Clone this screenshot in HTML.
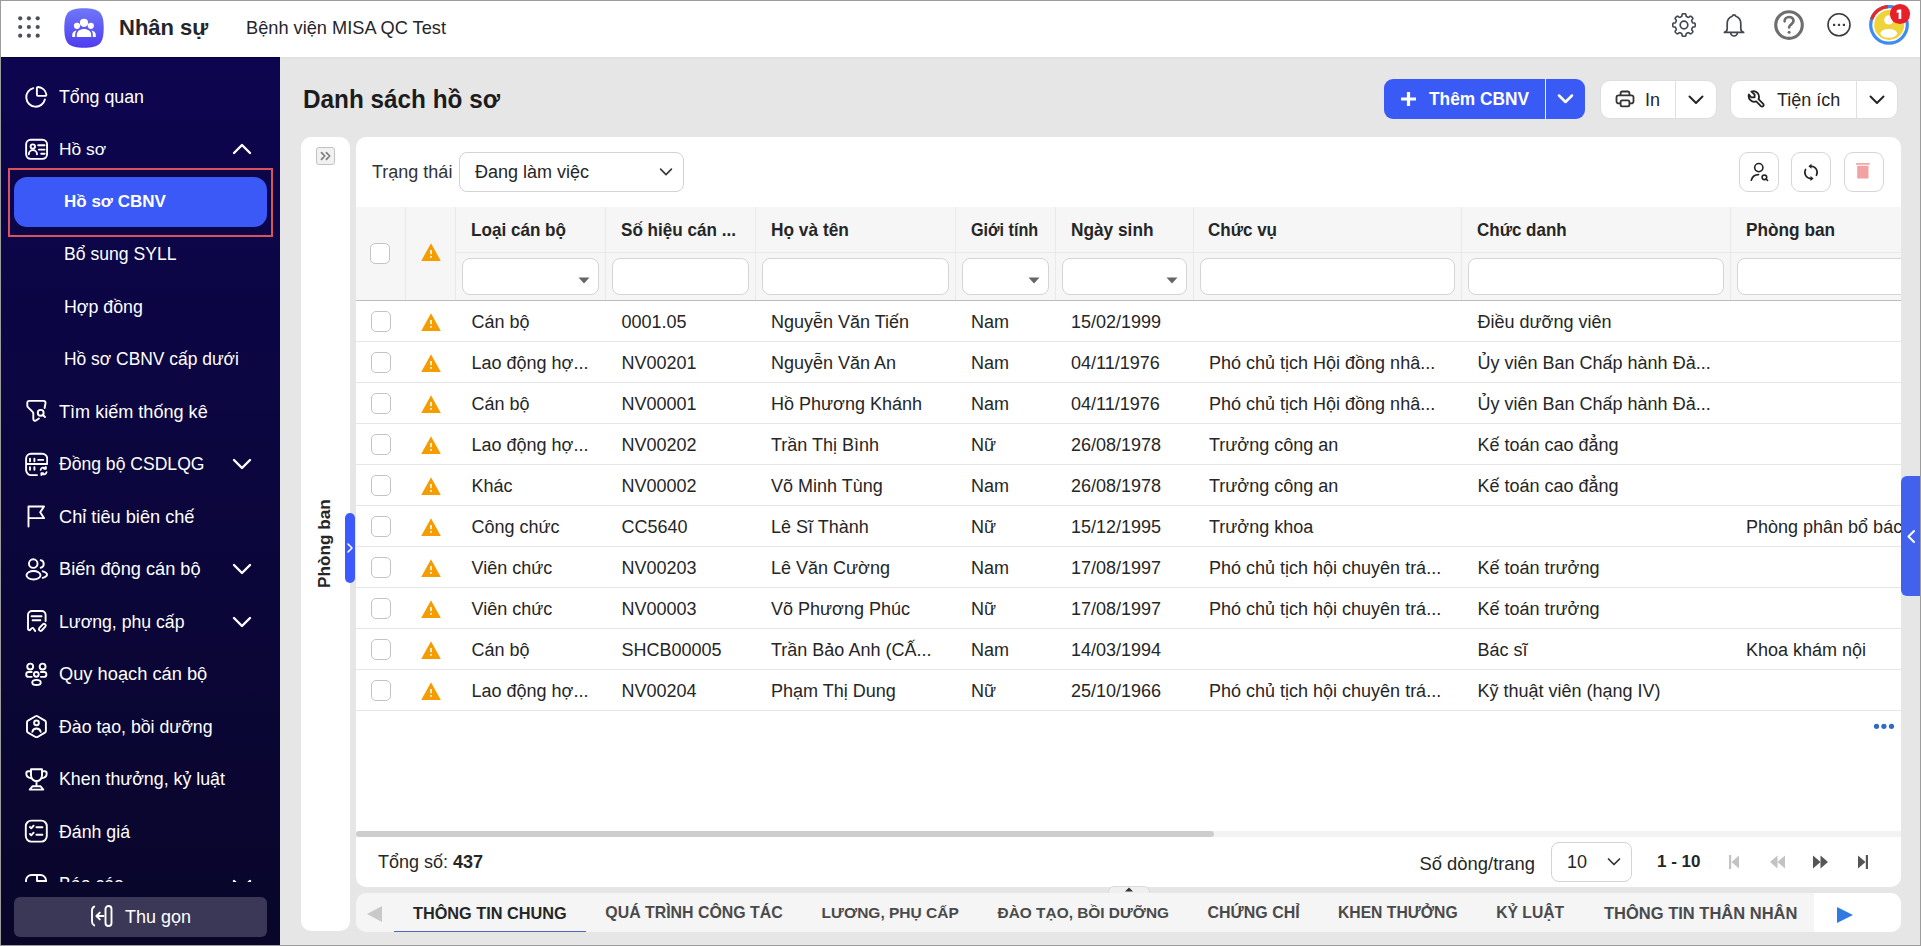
<!DOCTYPE html>
<html><head><meta charset="utf-8">
<style>
*{box-sizing:border-box;margin:0;padding:0}
html,body{width:1921px;height:946px;overflow:hidden;background:#fff;font-family:"Liberation Sans",sans-serif;color:#212121}
.a{position:absolute;white-space:nowrap}
svg{display:block}
#hdr{position:absolute;left:0;top:0;width:1921px;height:57px;background:#fff}
#side{position:absolute;left:0;top:57px;width:280px;height:889px;background:linear-gradient(180deg,#0d054f 0%,#0b0639 60%,#09062a 100%)}
#sclip{position:absolute;left:0;top:0;width:280px;height:882px;overflow:hidden}
#main{position:absolute;left:280px;top:57px;width:1641px;height:889px;background:#e6e6e6}
.bd{position:absolute;background:#9c9c9c}
.si{position:absolute;left:59px;font-size:17.6px;color:#fff;line-height:20px;white-space:nowrap}
</style></head><body>
<div id="hdr">
  <svg class="a" style="left:16px;top:14px" width="26" height="26" viewBox="0 0 26 26" fill="#4b505c">
    <circle cx="4.2" cy="4.3" r="2.1"/><circle cx="12.9" cy="4.3" r="2.1"/><circle cx="21.7" cy="4.3" r="2.1"/>
    <circle cx="4.2" cy="13" r="2.1"/><circle cx="12.9" cy="13" r="2.1"/><circle cx="21.7" cy="13" r="2.1"/>
    <circle cx="4.2" cy="21.7" r="2.1"/><circle cx="12.9" cy="21.7" r="2.1"/><circle cx="21.7" cy="21.7" r="2.1"/>
  </svg>
  <svg class="a" style="left:64px;top:8px" width="40" height="40" viewBox="0 0 40 40">
    <defs><linearGradient id="lg" x1="0" y1="0" x2="0" y2="1"><stop offset="0" stop-color="#6f78f8"/><stop offset="1" stop-color="#4f3cf0"/></linearGradient></defs>
    <path d="M20 0.3C35.5 0.3 39.7 4.5 39.7 20S35.5 39.7 20 39.7 0.3 35.5 0.3 20 4.5 0.3 20 0.3z" fill="url(#lg)"/>
    <g fill="#fff">
      <circle cx="20" cy="14.8" r="4.1"/><circle cx="13" cy="17.8" r="3.1"/><circle cx="26.8" cy="17.8" r="3.1"/>
      <path d="M12.8 29V26.8c0-3.6 3.2-5.8 7.2-5.8s7.2 2.2 7.2 5.8V29z"/>
      <path d="M8.2 29v-2c0-2.6 2-4.2 4.6-4.4-1.1 1-1.6 2.4-1.6 4V29z"/>
      <path d="M31.8 29v-2c0-2.6-2-4.2-4.6-4.4 1.1 1 1.6 2.4 1.6 4V29z"/>
    </g>
  </svg>
  <div class="a" style="left:119px;top:15px;font-size:22px;font-weight:bold;line-height:26px;color:#25262b">Nhân sự</div>
  <div class="a" style="left:246px;top:16.5px;font-size:18.5px;line-height:22px;color:#25262b;transform-origin:0 0;transform:scaleX(0.984)">Bệnh viện MISA QC Test</div>

  <svg class="a" style="left:1672px;top:13px" width="24" height="24" viewBox="0 0 24 24" fill="none" stroke="#42464f" stroke-width="1.6" stroke-linejoin="round"><path d="M23.20 12.00 L23.19 12.29 L23.18 12.59 L23.16 12.88 L23.11 13.17 L23.03 13.45 L22.84 13.72 L22.35 13.92 L21.52 14.02 L20.85 14.12 L20.53 14.29 L20.39 14.48 L20.29 14.69 L20.21 14.91 L20.13 15.12 L20.04 15.33 L19.95 15.54 L19.86 15.75 L19.77 15.96 L19.69 16.17 L19.65 16.42 L19.76 16.75 L20.16 17.30 L20.67 17.96 L20.88 18.45 L20.83 18.77 L20.68 19.03 L20.51 19.27 L20.32 19.49 L20.12 19.71 L19.92 19.92 L19.71 20.12 L19.49 20.32 L19.27 20.51 L19.03 20.68 L18.77 20.83 L18.45 20.88 L17.96 20.67 L17.30 20.16 L16.75 19.76 L16.42 19.65 L16.17 19.69 L15.96 19.77 L15.75 19.86 L15.54 19.95 L15.33 20.04 L15.12 20.13 L14.91 20.21 L14.69 20.29 L14.48 20.39 L14.29 20.53 L14.12 20.85 L14.02 21.52 L13.92 22.35 L13.72 22.84 L13.45 23.03 L13.17 23.11 L12.88 23.16 L12.59 23.18 L12.29 23.19 L12.00 23.20 L11.71 23.19 L11.41 23.18 L11.12 23.16 L10.83 23.11 L10.55 23.03 L10.28 22.84 L10.08 22.35 L9.98 21.52 L9.88 20.85 L9.71 20.53 L9.52 20.39 L9.31 20.29 L9.09 20.21 L8.88 20.13 L8.67 20.04 L8.46 19.95 L8.25 19.86 L8.04 19.77 L7.83 19.69 L7.58 19.65 L7.25 19.76 L6.70 20.16 L6.04 20.67 L5.55 20.88 L5.23 20.83 L4.97 20.68 L4.73 20.51 L4.51 20.32 L4.29 20.12 L4.08 19.92 L3.88 19.71 L3.68 19.49 L3.49 19.27 L3.32 19.03 L3.17 18.77 L3.12 18.45 L3.33 17.96 L3.84 17.30 L4.24 16.75 L4.35 16.42 L4.31 16.17 L4.23 15.96 L4.14 15.75 L4.05 15.54 L3.96 15.33 L3.87 15.12 L3.79 14.91 L3.71 14.69 L3.61 14.48 L3.47 14.29 L3.15 14.12 L2.48 14.02 L1.65 13.92 L1.16 13.72 L0.97 13.45 L0.89 13.17 L0.84 12.88 L0.82 12.59 L0.81 12.29 L0.80 12.00 L0.81 11.71 L0.82 11.41 L0.84 11.12 L0.89 10.83 L0.97 10.55 L1.16 10.28 L1.65 10.08 L2.48 9.98 L3.15 9.88 L3.47 9.71 L3.61 9.52 L3.71 9.31 L3.79 9.09 L3.87 8.88 L3.96 8.67 L4.05 8.46 L4.14 8.25 L4.23 8.04 L4.31 7.83 L4.35 7.58 L4.24 7.25 L3.84 6.70 L3.33 6.04 L3.12 5.55 L3.17 5.23 L3.32 4.97 L3.49 4.73 L3.68 4.51 L3.88 4.29 L4.08 4.08 L4.29 3.88 L4.51 3.68 L4.73 3.49 L4.97 3.32 L5.23 3.17 L5.55 3.12 L6.04 3.33 L6.70 3.84 L7.25 4.24 L7.58 4.35 L7.83 4.31 L8.04 4.23 L8.25 4.14 L8.46 4.05 L8.67 3.96 L8.88 3.87 L9.09 3.79 L9.31 3.71 L9.52 3.61 L9.71 3.47 L9.88 3.15 L9.98 2.48 L10.08 1.65 L10.28 1.16 L10.55 0.97 L10.83 0.89 L11.12 0.84 L11.41 0.82 L11.71 0.81 L12.00 0.80 L12.29 0.81 L12.59 0.82 L12.88 0.84 L13.17 0.89 L13.45 0.97 L13.72 1.16 L13.92 1.65 L14.02 2.48 L14.12 3.15 L14.29 3.47 L14.48 3.61 L14.69 3.71 L14.91 3.79 L15.12 3.87 L15.33 3.96 L15.54 4.05 L15.75 4.14 L15.96 4.23 L16.17 4.31 L16.42 4.35 L16.75 4.24 L17.30 3.84 L17.96 3.33 L18.45 3.12 L18.77 3.17 L19.03 3.32 L19.27 3.49 L19.49 3.68 L19.71 3.88 L19.92 4.08 L20.12 4.29 L20.32 4.51 L20.51 4.73 L20.68 4.97 L20.83 5.23 L20.88 5.55 L20.67 6.04 L20.16 6.70 L19.76 7.25 L19.65 7.58 L19.69 7.83 L19.77 8.04 L19.86 8.25 L19.95 8.46 L20.04 8.67 L20.13 8.88 L20.21 9.09 L20.29 9.31 L20.39 9.52 L20.53 9.71 L20.85 9.88 L21.52 9.98 L22.35 10.08 L22.84 10.28 L23.03 10.55 L23.11 10.83 L23.16 11.12 L23.18 11.41 L23.19 11.71Z"/><circle cx="12" cy="12" r="3.8" stroke-width="1.7"/></svg>
  <svg class="a" style="left:1722px;top:13px" width="24" height="26" viewBox="0 0 24 26" fill="none" stroke="#42464f" stroke-width="1.7" stroke-linejoin="round" stroke-linecap="round">
    <path d="M12 1.8c-1 0-1.6.6-1.8 1.4C7 4.3 5.2 7.2 5.2 10.6v5.2c0 1.6-.9 3-2.8 3.6h19.2c-1.9-.6-2.8-2-2.8-3.6v-5.2c0-3.4-1.8-6.3-5-7.4-.2-.8-.8-1.4-1.8-1.4z"/>
    <path d="M8.6 19.6a3.4 3.4 0 0 0 6.8 0"/>
  </svg>
  <svg class="a" style="left:1773px;top:9px" width="32" height="32" viewBox="0 0 32 32" fill="none" stroke="#6e6e6e" stroke-linecap="round">
    <circle cx="16" cy="16.1" r="13.3" stroke-width="3.1"/>
    <path d="M11.6 12.3c0-2.6 2-4.3 4.5-4.3s4.4 1.6 4.4 4c0 3.3-4.4 3.4-4.4 6.4" stroke-width="2.7" stroke-linejoin="round"/>
    <circle cx="16.1" cy="23.2" r="1.5" fill="#6e6e6e" stroke="none"/>
  </svg>
  <svg class="a" style="left:1827px;top:13px" width="24" height="24" viewBox="0 0 24 24" fill="none" stroke="#3a3a3a" stroke-width="1.6">
    <circle cx="12" cy="11.8" r="11"/>
    <g fill="#3a3a3a" stroke="none"><rect x="6" y="10.8" width="2.2" height="2.2"/><rect x="10.9" y="10.8" width="2.2" height="2.2"/><rect x="15.8" y="10.8" width="2.2" height="2.2"/></g>
  </svg>
  <svg class="a" style="left:1867px;top:3px" width="46" height="44" viewBox="0 0 46 44">
    <circle cx="22" cy="21.85" r="18.3" fill="none" stroke="#3f8cf0" stroke-width="3.2"/>
    <path d="M4.6 16.2A18.3 18.3 0 0 1 21 3.6" fill="none" stroke="#e32b2b" stroke-width="3.2"/>
    <circle cx="22.2" cy="22" r="15" fill="#efd33b"/>
    <circle cx="21.8" cy="16.9" r="4.6" fill="#fff"/>
    <ellipse cx="21.8" cy="30.3" rx="8.4" ry="4.4" fill="#fff"/>
    <circle cx="33" cy="11" r="10.1" fill="#e71f28"/>
    <path d="M31.6 6.4h2.7v9.6h-2.7V9.3l-1.9.8V7.6z" fill="#fff"/>
  </svg>
</div>
<div id="main"></div>
<div class="a" style="left:302.5px;top:84.5px;font-size:26.2px;font-weight:bold;line-height:28px;color:#1c1c1c;transform-origin:0 0;transform:scaleX(0.9284)">Danh sách hồ sơ</div>
<div class="a" style="left:1384px;top:79px;width:201px;height:40px;border-radius:9px;background:#3a5af6"></div>
<div class="a" style="left:1545px;top:79px;width:1.2px;height:40px;background:#eef0ff"></div>
<svg class="a" style="left:1400px;top:91px" width="17" height="17" viewBox="0 0 17 17" stroke="#fff" stroke-width="3.2" stroke-linecap="butt"><path d="M8.5 1v14M1 8h15"/></svg>
<div class="a" style="left:1429px;top:89.2px;font-size:18.6px;font-weight:bold;line-height:20px;color:#fff;transform-origin:0 0;transform:scaleX(0.9308)">Thêm CBNV</div>
<svg class="a" style="left:1557px;top:93px" width="17" height="12" viewBox="0 0 17 12" fill="none" stroke="#fff" stroke-width="2.5" stroke-linecap="round" stroke-linejoin="round"><path d="M2 2.5l6.5 6.5 6.5-6.5"/></svg>
<div class="a" style="left:1600px;top:79.5px;width:117px;height:39px;border-radius:10px;background:#fff;border:1px solid #dedede"></div>
<div class="a" style="left:1675px;top:80px;width:1px;height:39px;background:#e0e0e0"></div>
<svg class="a" style="left:1615px;top:90px" width="20" height="18" viewBox="0 0 20 18" fill="none" stroke="#333" stroke-width="1.8" stroke-linejoin="round"><path d="M5.6 5.3V3.1A1.6 1.6 0 0 1 7.2 1.5h5.6a1.6 1.6 0 0 1 1.6 1.6v2.2"/><path d="M5 13.4H3.6a2.1 2.1 0 0 1-2.1-2.1V7.4a2.1 2.1 0 0 1 2.1-2.1h12.8a2.1 2.1 0 0 1 2.1 2.1v3.9a2.1 2.1 0 0 1-2.1 2.1H15"/><rect x="5.6" y="10.3" width="8.8" height="6" rx="1.6"/></svg>
<div class="a" style="left:1645px;top:90px;font-size:18px;line-height:20px;color:#262626">In</div>
<svg class="a" style="left:1688px;top:94px" width="17" height="12" viewBox="0 0 17 12" fill="none" stroke="#262626" stroke-width="2" stroke-linecap="round" stroke-linejoin="round"><path d="M1.5 2.5l6.5 6.5 6.5-6.5"/></svg>
<div class="a" style="left:1730px;top:79.5px;width:167.5px;height:39px;border-radius:10px;background:#fff;border:1px solid #dedede"></div>
<div class="a" style="left:1856px;top:80px;width:1px;height:39px;background:#e0e0e0"></div>
<svg class="a" style="left:1746px;top:90px" width="20" height="20" viewBox="0 0 20 20" fill="none" stroke="#222" stroke-width="1.8" stroke-linejoin="round"><path d="M5.4 1.6L8.6 4.5V7.3H5.1L2.9 4.5A5.6 5.6 0 0 0 10.2 11.4L14.9 16.1A1.6 1.6 0 0 0 17.2 13.8L12.5 9.1A5.6 5.6 0 0 0 5.4 1.6Z"/></svg>
<div class="a" style="left:1777px;top:90px;font-size:18px;line-height:20px;color:#262626">Tiện ích</div>
<svg class="a" style="left:1869px;top:94px" width="17" height="12" viewBox="0 0 17 12" fill="none" stroke="#262626" stroke-width="2" stroke-linecap="round" stroke-linejoin="round"><path d="M1.5 2.5l6.5 6.5 6.5-6.5"/></svg>
<div class="a" style="left:301px;top:137px;width:49px;height:794px;border-radius:10px;background:#fff"></div>
<div class="a" style="left:316px;top:147px;width:19px;height:18px;border-radius:3px;background:#f1f1f1;border:1px solid #c2c2c2"></div>
<svg class="a" style="left:320px;top:151px" width="12" height="10" viewBox="0 0 12 10" fill="none" stroke="#7c7c7c" stroke-width="1.7" stroke-linecap="round" stroke-linejoin="round"><path d="M1.5 1.6L4.8 5 1.5 8.4M6.4 1.6L9.7 5 6.4 8.4"/></svg>
<div class="a" style="left:316px;top:588px;transform-origin:0 0;transform:rotate(-90deg);font-size:17.2px;font-weight:bold;line-height:16px;color:#262626">Phòng ban</div>
<div class="a" style="left:345px;top:513px;width:10px;height:70px;border-radius:5px;background:#3d5afe"></div>
<svg class="a" style="left:346px;top:542px" width="8" height="12" viewBox="0 0 8 12" fill="none" stroke="#fff" stroke-width="1.6" stroke-linecap="round" stroke-linejoin="round"><path d="M2 2l4 4-4 4"/></svg>
<div class="a" style="left:356px;top:137px;width:1545px;height:750px;border-radius:10px;background:#fff;overflow:hidden">
</div>
<div class="a" style="left:0;top:0;width:1901px;height:887px;overflow:hidden">
<div class="a" style="left:372px;top:162px;font-size:18px;line-height:20px;color:#333">Trạng thái</div>
<div class="a" style="left:459px;top:152px;width:225px;height:40px;border-radius:8px;border:1px solid #d3d3d3;background:#fff"></div>
<div class="a" style="left:475px;top:162px;font-size:18px;line-height:20px;color:#262626">Đang làm việc</div>
<svg class="a" style="left:659px;top:167px" width="14" height="10" viewBox="0 0 14 10" fill="none" stroke="#3a3a3a" stroke-width="1.7" stroke-linecap="round" stroke-linejoin="round"><path d="M1.6 2.2l5.4 5.4 5.4-5.4"/></svg>
<div class="a" style="left:1739px;top:152px;width:40px;height:40px;border-radius:9px;border:1px solid #d6d6d6;background:#fff"></div>
<div class="a" style="left:1791px;top:152px;width:40px;height:40px;border-radius:9px;border:1px solid #d6d6d6;background:#fff"></div>
<div class="a" style="left:1844px;top:152px;width:40px;height:40px;border-radius:9px;border:1px solid #d6d6d6;background:#fff"></div>
<svg class="a" style="left:1748px;top:161px" width="22" height="22" viewBox="0 0 22 22" fill="none" stroke="#222" stroke-width="1.6" stroke-linecap="round"><circle cx="10.8" cy="6.6" r="4.1"/><path d="M3.3 19.3A7.6 7.6 0 0 1 10.6 13.6"/><circle cx="16.4" cy="16.3" r="2.3"/><path d="M18.1 18l1.5 1.5"/></svg>
<svg class="a" style="left:1800px;top:161px" width="22" height="22" viewBox="0 0 22 22" fill="none" stroke="#222" stroke-width="1.6" stroke-linecap="round"><path d="M11.3 5.2A6.2 6.2 0 0 1 16.4 14.4"/><path d="M10.7 17.6A6.2 6.2 0 0 1 5.6 8.4"/><path d="M8.4 5.2l3.1-2.5v5z" fill="#222" stroke="none"/><path d="M13.6 17.6l-3.1 2.5v-5z" fill="#222" stroke="none"/></svg>
<svg class="a" style="left:1853px;top:161px" width="22" height="22" viewBox="0 0 22 22"><rect x="3" y="2.1" width="13.8" height="1.6" fill="#f0a0a0"/><path d="M4.2 4.8h11.3v11.6a1.2 1.2 0 0 1-1.2 1.2H5.4a1.2 1.2 0 0 1-1.2-1.2z" fill="#f2a2a2"/></svg>
<div class="a" style="left:356px;top:207px;width:1545px;height:93px;background:#f6f6f6"></div>
<div class="a" style="left:455px;top:252px;width:1446px;height:1px;background:#e8e8e8"></div>
<div class="a" style="left:356px;top:300px;width:1545px;height:1px;background:#bdbdbd"></div>
<div class="a" style="left:405px;top:207px;width:1px;height:93px;background:#e9e9e9"></div>
<div class="a" style="left:455px;top:207px;width:1px;height:93px;background:#e9e9e9"></div>
<div class="a" style="left:605px;top:207px;width:1px;height:93px;background:#e9e9e9"></div>
<div class="a" style="left:755px;top:207px;width:1px;height:93px;background:#e9e9e9"></div>
<div class="a" style="left:955px;top:207px;width:1px;height:93px;background:#e9e9e9"></div>
<div class="a" style="left:1055px;top:207px;width:1px;height:93px;background:#e9e9e9"></div>
<div class="a" style="left:1193px;top:207px;width:1px;height:93px;background:#e9e9e9"></div>
<div class="a" style="left:1461px;top:207px;width:1px;height:93px;background:#e9e9e9"></div>
<div class="a" style="left:1730px;top:207px;width:1px;height:93px;background:#e9e9e9"></div>
<div class="a" style="left:471.0px;top:219.5px;font-size:18.4px;font-weight:bold;line-height:20px;color:#262626;transform-origin:0 0;transform:scaleX(0.9295)">Loại cán bộ</div>
<div class="a" style="left:621.0px;top:219.5px;font-size:18.4px;font-weight:bold;line-height:20px;color:#262626;transform-origin:0 0;transform:scaleX(0.9299)">Số hiệu cán ...</div>
<div class="a" style="left:771.0px;top:219.5px;font-size:18.4px;font-weight:bold;line-height:20px;color:#262626;transform-origin:0 0;transform:scaleX(0.9409)">Họ và tên</div>
<div class="a" style="left:971.2px;top:219.5px;font-size:18.4px;font-weight:bold;line-height:20px;color:#262626;transform-origin:0 0;transform:scaleX(0.8793)">Giới tính</div>
<div class="a" style="left:1070.6px;top:219.5px;font-size:18.4px;font-weight:bold;line-height:20px;color:#262626;transform-origin:0 0;transform:scaleX(0.9385)">Ngày sinh</div>
<div class="a" style="left:1208.4px;top:219.5px;font-size:18.4px;font-weight:bold;line-height:20px;color:#262626;transform-origin:0 0;transform:scaleX(0.9244)">Chức vụ</div>
<div class="a" style="left:1477.2px;top:219.5px;font-size:18.4px;font-weight:bold;line-height:20px;color:#262626;transform-origin:0 0;transform:scaleX(0.9237)">Chức danh</div>
<div class="a" style="left:1745.6px;top:219.5px;font-size:18.4px;font-weight:bold;line-height:20px;color:#262626;transform-origin:0 0;transform:scaleX(0.9377)">Phòng ban</div>
<div class="a" style="left:462px;top:258px;width:137px;height:37px;border-radius:8px;border:1px solid #d5d5d5;background:#fff"></div>
<svg class="a" style="left:578px;top:277px" width="12" height="7" viewBox="0 0 12 7"><path d="M0.5 0.5h11L6 6.5z" fill="#666"/></svg>
<div class="a" style="left:612px;top:258px;width:137px;height:37px;border-radius:8px;border:1px solid #d5d5d5;background:#fff"></div>
<div class="a" style="left:762px;top:258px;width:187px;height:37px;border-radius:8px;border:1px solid #d5d5d5;background:#fff"></div>
<div class="a" style="left:962px;top:258px;width:87px;height:37px;border-radius:8px;border:1px solid #d5d5d5;background:#fff"></div>
<svg class="a" style="left:1028px;top:277px" width="12" height="7" viewBox="0 0 12 7"><path d="M0.5 0.5h11L6 6.5z" fill="#666"/></svg>
<div class="a" style="left:1062px;top:258px;width:125px;height:37px;border-radius:8px;border:1px solid #d5d5d5;background:#fff"></div>
<svg class="a" style="left:1166px;top:277px" width="12" height="7" viewBox="0 0 12 7"><path d="M0.5 0.5h11L6 6.5z" fill="#666"/></svg>
<div class="a" style="left:1200px;top:258px;width:255px;height:37px;border-radius:8px;border:1px solid #d5d5d5;background:#fff"></div>
<div class="a" style="left:1468px;top:258px;width:256px;height:37px;border-radius:8px;border:1px solid #d5d5d5;background:#fff"></div>
<div class="a" style="left:1737px;top:258px;width:223px;height:37px;border-radius:8px;border:1px solid #d5d5d5;background:#fff"></div>
<div class="a" style="left:370px;top:243px;width:20px;height:21px;border-radius:5px;border:1px solid #c4c4c4;background:#fff"></div>
<svg class="a" style="left:421px;top:243px" width="20" height="18" viewBox="0 0 20 18"><path d="M10 0.2L19.8 17.9H0.2z" fill="#f59c00"/><rect x="9.2" y="7" width="1.6" height="4.2" fill="#fff"/><rect x="9.2" y="13" width="1.6" height="1.8" fill="#fff"/></svg>
<div class="a" style="left:356px;top:341px;width:1545px;height:1px;background:#e6e6e6"></div>
<div class="a" style="left:371px;top:311px;width:20px;height:21px;border-radius:5px;border:1px solid #c4c4c4;background:#fff"></div>
<svg class="a" style="left:421px;top:313px" width="20" height="18" viewBox="0 0 20 18"><path d="M10 0.2L19.8 17.9H0.2z" fill="#f59c00"/><rect x="9.2" y="7" width="1.6" height="4.2" fill="#fff"/><rect x="9.2" y="13" width="1.6" height="1.8" fill="#fff"/></svg>
<div class="a" style="left:471.5px;top:312.3px;font-size:18px;line-height:20px;color:#262626">Cán bộ</div>
<div class="a" style="left:621.5px;top:312.3px;font-size:18px;line-height:20px;color:#262626">0001.05</div>
<div class="a" style="left:771.0px;top:312.3px;font-size:18px;line-height:20px;color:#262626">Nguyễn Văn Tiến</div>
<div class="a" style="left:971.0px;top:312.3px;font-size:18px;line-height:20px;color:#262626">Nam</div>
<div class="a" style="left:1071.0px;top:312.3px;font-size:18px;line-height:20px;color:#262626">15/02/1999</div>
<div class="a" style="left:1477.5px;top:312.3px;font-size:18px;line-height:20px;color:#262626">Điều dưỡng viên</div>
<div class="a" style="left:356px;top:382px;width:1545px;height:1px;background:#e6e6e6"></div>
<div class="a" style="left:371px;top:352px;width:20px;height:21px;border-radius:5px;border:1px solid #c4c4c4;background:#fff"></div>
<svg class="a" style="left:421px;top:354px" width="20" height="18" viewBox="0 0 20 18"><path d="M10 0.2L19.8 17.9H0.2z" fill="#f59c00"/><rect x="9.2" y="7" width="1.6" height="4.2" fill="#fff"/><rect x="9.2" y="13" width="1.6" height="1.8" fill="#fff"/></svg>
<div class="a" style="left:471.5px;top:353.3px;font-size:18px;line-height:20px;color:#262626">Lao động hợ...</div>
<div class="a" style="left:621.5px;top:353.3px;font-size:18px;line-height:20px;color:#262626">NV00201</div>
<div class="a" style="left:771.0px;top:353.3px;font-size:18px;line-height:20px;color:#262626">Nguyễn Văn An</div>
<div class="a" style="left:971.0px;top:353.3px;font-size:18px;line-height:20px;color:#262626">Nam</div>
<div class="a" style="left:1071.0px;top:353.3px;font-size:18px;line-height:20px;color:#262626">04/11/1976</div>
<div class="a" style="left:1209.0px;top:353.3px;font-size:18px;line-height:20px;color:#262626">Phó chủ tịch Hội đồng nhâ...</div>
<div class="a" style="left:1477.5px;top:353.3px;font-size:18px;line-height:20px;color:#262626">Ủy viên Ban Chấp hành Đả...</div>
<div class="a" style="left:356px;top:423px;width:1545px;height:1px;background:#e6e6e6"></div>
<div class="a" style="left:371px;top:393px;width:20px;height:21px;border-radius:5px;border:1px solid #c4c4c4;background:#fff"></div>
<svg class="a" style="left:421px;top:395px" width="20" height="18" viewBox="0 0 20 18"><path d="M10 0.2L19.8 17.9H0.2z" fill="#f59c00"/><rect x="9.2" y="7" width="1.6" height="4.2" fill="#fff"/><rect x="9.2" y="13" width="1.6" height="1.8" fill="#fff"/></svg>
<div class="a" style="left:471.5px;top:394.3px;font-size:18px;line-height:20px;color:#262626">Cán bộ</div>
<div class="a" style="left:621.5px;top:394.3px;font-size:18px;line-height:20px;color:#262626">NV00001</div>
<div class="a" style="left:771.0px;top:394.3px;font-size:18px;line-height:20px;color:#262626">Hồ Phương Khánh</div>
<div class="a" style="left:971.0px;top:394.3px;font-size:18px;line-height:20px;color:#262626">Nam</div>
<div class="a" style="left:1071.0px;top:394.3px;font-size:18px;line-height:20px;color:#262626">04/11/1976</div>
<div class="a" style="left:1209.0px;top:394.3px;font-size:18px;line-height:20px;color:#262626">Phó chủ tịch Hội đồng nhâ...</div>
<div class="a" style="left:1477.5px;top:394.3px;font-size:18px;line-height:20px;color:#262626">Ủy viên Ban Chấp hành Đả...</div>
<div class="a" style="left:356px;top:464px;width:1545px;height:1px;background:#e6e6e6"></div>
<div class="a" style="left:371px;top:434px;width:20px;height:21px;border-radius:5px;border:1px solid #c4c4c4;background:#fff"></div>
<svg class="a" style="left:421px;top:436px" width="20" height="18" viewBox="0 0 20 18"><path d="M10 0.2L19.8 17.9H0.2z" fill="#f59c00"/><rect x="9.2" y="7" width="1.6" height="4.2" fill="#fff"/><rect x="9.2" y="13" width="1.6" height="1.8" fill="#fff"/></svg>
<div class="a" style="left:471.5px;top:435.3px;font-size:18px;line-height:20px;color:#262626">Lao động hợ...</div>
<div class="a" style="left:621.5px;top:435.3px;font-size:18px;line-height:20px;color:#262626">NV00202</div>
<div class="a" style="left:771.0px;top:435.3px;font-size:18px;line-height:20px;color:#262626">Trần Thị Bình</div>
<div class="a" style="left:971.0px;top:435.3px;font-size:18px;line-height:20px;color:#262626">Nữ</div>
<div class="a" style="left:1071.0px;top:435.3px;font-size:18px;line-height:20px;color:#262626">26/08/1978</div>
<div class="a" style="left:1209.0px;top:435.3px;font-size:18px;line-height:20px;color:#262626">Trưởng công an</div>
<div class="a" style="left:1477.5px;top:435.3px;font-size:18px;line-height:20px;color:#262626">Kế toán cao đẳng</div>
<div class="a" style="left:356px;top:505px;width:1545px;height:1px;background:#e6e6e6"></div>
<div class="a" style="left:371px;top:475px;width:20px;height:21px;border-radius:5px;border:1px solid #c4c4c4;background:#fff"></div>
<svg class="a" style="left:421px;top:477px" width="20" height="18" viewBox="0 0 20 18"><path d="M10 0.2L19.8 17.9H0.2z" fill="#f59c00"/><rect x="9.2" y="7" width="1.6" height="4.2" fill="#fff"/><rect x="9.2" y="13" width="1.6" height="1.8" fill="#fff"/></svg>
<div class="a" style="left:471.5px;top:476.3px;font-size:18px;line-height:20px;color:#262626">Khác</div>
<div class="a" style="left:621.5px;top:476.3px;font-size:18px;line-height:20px;color:#262626">NV00002</div>
<div class="a" style="left:771.0px;top:476.3px;font-size:18px;line-height:20px;color:#262626">Võ Minh Tùng</div>
<div class="a" style="left:971.0px;top:476.3px;font-size:18px;line-height:20px;color:#262626">Nam</div>
<div class="a" style="left:1071.0px;top:476.3px;font-size:18px;line-height:20px;color:#262626">26/08/1978</div>
<div class="a" style="left:1209.0px;top:476.3px;font-size:18px;line-height:20px;color:#262626">Trưởng công an</div>
<div class="a" style="left:1477.5px;top:476.3px;font-size:18px;line-height:20px;color:#262626">Kế toán cao đẳng</div>
<div class="a" style="left:356px;top:546px;width:1545px;height:1px;background:#e6e6e6"></div>
<div class="a" style="left:371px;top:516px;width:20px;height:21px;border-radius:5px;border:1px solid #c4c4c4;background:#fff"></div>
<svg class="a" style="left:421px;top:518px" width="20" height="18" viewBox="0 0 20 18"><path d="M10 0.2L19.8 17.9H0.2z" fill="#f59c00"/><rect x="9.2" y="7" width="1.6" height="4.2" fill="#fff"/><rect x="9.2" y="13" width="1.6" height="1.8" fill="#fff"/></svg>
<div class="a" style="left:471.5px;top:517.3px;font-size:18px;line-height:20px;color:#262626">Công chức</div>
<div class="a" style="left:621.5px;top:517.3px;font-size:18px;line-height:20px;color:#262626">CC5640</div>
<div class="a" style="left:771.0px;top:517.3px;font-size:18px;line-height:20px;color:#262626">Lê Sĩ Thành</div>
<div class="a" style="left:971.0px;top:517.3px;font-size:18px;line-height:20px;color:#262626">Nữ</div>
<div class="a" style="left:1071.0px;top:517.3px;font-size:18px;line-height:20px;color:#262626">15/12/1995</div>
<div class="a" style="left:1209.0px;top:517.3px;font-size:18px;line-height:20px;color:#262626">Trưởng khoa</div>
<div class="a" style="left:1746.0px;top:517.3px;font-size:18px;line-height:20px;color:#262626">Phòng phân bổ bác sĩ</div>
<div class="a" style="left:356px;top:587px;width:1545px;height:1px;background:#e6e6e6"></div>
<div class="a" style="left:371px;top:557px;width:20px;height:21px;border-radius:5px;border:1px solid #c4c4c4;background:#fff"></div>
<svg class="a" style="left:421px;top:559px" width="20" height="18" viewBox="0 0 20 18"><path d="M10 0.2L19.8 17.9H0.2z" fill="#f59c00"/><rect x="9.2" y="7" width="1.6" height="4.2" fill="#fff"/><rect x="9.2" y="13" width="1.6" height="1.8" fill="#fff"/></svg>
<div class="a" style="left:471.5px;top:558.3px;font-size:18px;line-height:20px;color:#262626">Viên chức</div>
<div class="a" style="left:621.5px;top:558.3px;font-size:18px;line-height:20px;color:#262626">NV00203</div>
<div class="a" style="left:771.0px;top:558.3px;font-size:18px;line-height:20px;color:#262626">Lê Văn Cường</div>
<div class="a" style="left:971.0px;top:558.3px;font-size:18px;line-height:20px;color:#262626">Nam</div>
<div class="a" style="left:1071.0px;top:558.3px;font-size:18px;line-height:20px;color:#262626">17/08/1997</div>
<div class="a" style="left:1209.0px;top:558.3px;font-size:18px;line-height:20px;color:#262626">Phó chủ tịch hội chuyên trá...</div>
<div class="a" style="left:1477.5px;top:558.3px;font-size:18px;line-height:20px;color:#262626">Kế toán trưởng</div>
<div class="a" style="left:356px;top:628px;width:1545px;height:1px;background:#e6e6e6"></div>
<div class="a" style="left:371px;top:598px;width:20px;height:21px;border-radius:5px;border:1px solid #c4c4c4;background:#fff"></div>
<svg class="a" style="left:421px;top:600px" width="20" height="18" viewBox="0 0 20 18"><path d="M10 0.2L19.8 17.9H0.2z" fill="#f59c00"/><rect x="9.2" y="7" width="1.6" height="4.2" fill="#fff"/><rect x="9.2" y="13" width="1.6" height="1.8" fill="#fff"/></svg>
<div class="a" style="left:471.5px;top:599.3px;font-size:18px;line-height:20px;color:#262626">Viên chức</div>
<div class="a" style="left:621.5px;top:599.3px;font-size:18px;line-height:20px;color:#262626">NV00003</div>
<div class="a" style="left:771.0px;top:599.3px;font-size:18px;line-height:20px;color:#262626">Võ Phương Phúc</div>
<div class="a" style="left:971.0px;top:599.3px;font-size:18px;line-height:20px;color:#262626">Nữ</div>
<div class="a" style="left:1071.0px;top:599.3px;font-size:18px;line-height:20px;color:#262626">17/08/1997</div>
<div class="a" style="left:1209.0px;top:599.3px;font-size:18px;line-height:20px;color:#262626">Phó chủ tịch hội chuyên trá...</div>
<div class="a" style="left:1477.5px;top:599.3px;font-size:18px;line-height:20px;color:#262626">Kế toán trưởng</div>
<div class="a" style="left:356px;top:669px;width:1545px;height:1px;background:#e6e6e6"></div>
<div class="a" style="left:371px;top:639px;width:20px;height:21px;border-radius:5px;border:1px solid #c4c4c4;background:#fff"></div>
<svg class="a" style="left:421px;top:641px" width="20" height="18" viewBox="0 0 20 18"><path d="M10 0.2L19.8 17.9H0.2z" fill="#f59c00"/><rect x="9.2" y="7" width="1.6" height="4.2" fill="#fff"/><rect x="9.2" y="13" width="1.6" height="1.8" fill="#fff"/></svg>
<div class="a" style="left:471.5px;top:640.3px;font-size:18px;line-height:20px;color:#262626">Cán bộ</div>
<div class="a" style="left:621.5px;top:640.3px;font-size:18px;line-height:20px;color:#262626">SHCB00005</div>
<div class="a" style="left:771.0px;top:640.3px;font-size:18px;line-height:20px;color:#262626">Trần Bảo Anh (CẤ...</div>
<div class="a" style="left:971.0px;top:640.3px;font-size:18px;line-height:20px;color:#262626">Nam</div>
<div class="a" style="left:1071.0px;top:640.3px;font-size:18px;line-height:20px;color:#262626">14/03/1994</div>
<div class="a" style="left:1477.5px;top:640.3px;font-size:18px;line-height:20px;color:#262626">Bác sĩ</div>
<div class="a" style="left:1746.0px;top:640.3px;font-size:18px;line-height:20px;color:#262626">Khoa khám nội</div>
<div class="a" style="left:356px;top:710px;width:1545px;height:1px;background:#e6e6e6"></div>
<div class="a" style="left:371px;top:680px;width:20px;height:21px;border-radius:5px;border:1px solid #c4c4c4;background:#fff"></div>
<svg class="a" style="left:421px;top:682px" width="20" height="18" viewBox="0 0 20 18"><path d="M10 0.2L19.8 17.9H0.2z" fill="#f59c00"/><rect x="9.2" y="7" width="1.6" height="4.2" fill="#fff"/><rect x="9.2" y="13" width="1.6" height="1.8" fill="#fff"/></svg>
<div class="a" style="left:471.5px;top:681.3px;font-size:18px;line-height:20px;color:#262626">Lao động hợ...</div>
<div class="a" style="left:621.5px;top:681.3px;font-size:18px;line-height:20px;color:#262626">NV00204</div>
<div class="a" style="left:771.0px;top:681.3px;font-size:18px;line-height:20px;color:#262626">Phạm Thị Dung</div>
<div class="a" style="left:971.0px;top:681.3px;font-size:18px;line-height:20px;color:#262626">Nữ</div>
<div class="a" style="left:1071.0px;top:681.3px;font-size:18px;line-height:20px;color:#262626">25/10/1966</div>
<div class="a" style="left:1209.0px;top:681.3px;font-size:18px;line-height:20px;color:#262626">Phó chủ tịch hội chuyên trá...</div>
<div class="a" style="left:1477.5px;top:681.3px;font-size:18px;line-height:20px;color:#262626">Kỹ thuật viên (hạng IV)</div>
</div>
<svg class="a" style="left:1872px;top:722px" width="23" height="9" viewBox="0 0 23 9" fill="#2f6bc5"><circle cx="4.5" cy="4.3" r="2.6"/><circle cx="11.9" cy="4.3" r="2.6"/><circle cx="19.5" cy="4.3" r="2.6"/></svg>
<div class="a" style="left:356px;top:831px;width:1545px;height:6px;background:#f3f3f3"></div>
<div class="a" style="left:356px;top:831px;width:858px;height:6px;border-radius:3px;background:#cdcdcd"></div>
<div class="a" style="left:378px;top:852px;font-size:18px;line-height:20px;color:#262626">Tổng số: <b>437</b></div>
<div class="a" style="left:1419.5px;top:854px;font-size:18.4px;line-height:20px;color:#262626">Số dòng/trang</div>
<div class="a" style="left:1551px;top:842px;width:81px;height:40px;border-radius:8px;border:1px solid #d3d3d3;background:#fff"></div>
<div class="a" style="left:1567px;top:852px;font-size:18px;line-height:20px;color:#262626">10</div>
<svg class="a" style="left:1607px;top:857px" width="14" height="10" viewBox="0 0 14 10" fill="none" stroke="#333" stroke-width="1.7" stroke-linecap="round" stroke-linejoin="round"><path d="M1.5 2l5.5 5.5 5.5-5.5"/></svg>
<div class="a" style="left:1657px;top:852px;font-size:17px;font-weight:bold;line-height:20px;color:#262626">1 - 10</div>
<svg class="a" style="left:1728px;top:854px" width="12" height="16" viewBox="0 0 12 16" fill="#c3c3c3"><rect x="1" y="1" width="2.2" height="14"/><path d="M11 1.5v13L3.5 8z"/></svg>
<svg class="a" style="left:1769px;top:854px" width="17" height="16" viewBox="0 0 17 16" fill="#c3c3c3"><path d="M8.5 1.5v13L1 8zM16 1.5v13L8.5 8z"/></svg>
<svg class="a" style="left:1812px;top:854px" width="17" height="16" viewBox="0 0 17 16" fill="#555"><path d="M1 1.5v13L8.5 8zM8.5 1.5v13L16 8z"/></svg>
<svg class="a" style="left:1857px;top:854px" width="12" height="16" viewBox="0 0 12 16" fill="#555"><path d="M1 1.5v13L8.5 8z"/><rect x="8.8" y="1" width="2.2" height="14"/></svg>
<div class="a" style="left:1108px;top:886px;width:42px;height:8px;border-radius:6px 6px 0 0;background:#efefef;border:1px solid #dadada;border-bottom:none"></div>
<svg class="a" style="left:1124px;top:886px" width="10" height="6" viewBox="0 0 10 6"><path d="M1 5.5L5 1.5 9 5.5z" fill="#333"/></svg>
<div class="a" style="left:356px;top:893px;width:1545px;height:39px;border-radius:10px;background:#f5f5f6;overflow:hidden"><div class="a" style="left:1458px;top:0;width:87px;height:39px;background:#fff"></div></div>
<svg class="a" style="left:366px;top:905px" width="17" height="18" viewBox="0 0 17 18"><path d="M16 1v16L1 9z" fill="#c9c9c9"/></svg>
<div class="a" style="left:413.0px;top:902.5px;font-size:16.30px;font-weight:bold;line-height:20px;color:#262626">THÔNG TIN CHUNG</div>
<div class="a" style="left:605.3px;top:902.5px;font-size:15.90px;font-weight:bold;line-height:20px;color:#4a4a4a">QUÁ TRÌNH CÔNG TÁC</div>
<div class="a" style="left:821.6px;top:902.5px;font-size:15.50px;font-weight:bold;line-height:20px;color:#4a4a4a">LƯƠNG, PHỤ CẤP</div>
<div class="a" style="left:997.6px;top:902.5px;font-size:15.42px;font-weight:bold;line-height:20px;color:#4a4a4a">ĐÀO TẠO, BỒI DƯỠNG</div>
<div class="a" style="left:1207.6px;top:902.5px;font-size:15.95px;font-weight:bold;line-height:20px;color:#4a4a4a">CHỨNG CHỈ</div>
<div class="a" style="left:1338.0px;top:902.5px;font-size:15.70px;font-weight:bold;line-height:20px;color:#4a4a4a">KHEN THƯỞNG</div>
<div class="a" style="left:1496.2px;top:902.5px;font-size:15.70px;font-weight:bold;line-height:20px;color:#4a4a4a">KỶ LUẬT</div>
<div class="a" style="left:1604.0px;top:902.5px;font-size:16.50px;font-weight:bold;line-height:20px;color:#4a4a4a">THÔNG TIN THÂN NHÂN</div>
<div class="a" style="left:394px;top:930.5px;width:192px;height:1.6px;background:#4f66c4"></div>
<svg class="a" style="left:1836px;top:906px" width="18" height="18" viewBox="0 0 18 18"><path d="M1 1v16l16-8z" fill="#2f7ae0"/></svg>
<div class="a" style="left:1901px;top:476px;width:22px;height:120px;border-radius:6px 0 0 6px;background:#4262ee"></div>
<svg class="a" style="left:1905px;top:529px" width="12" height="15" viewBox="0 0 12 15" fill="none" stroke="#fff" stroke-width="2" stroke-linecap="round" stroke-linejoin="round"><path d="M9 2L3.5 7.5 9 13"/></svg>
<div id="side"></div>
<div id="sclip">
  <svg class="a" style="left:24px;top:85px" width="24" height="24" viewBox="0 0 24 24" fill="none" stroke="#fff" stroke-width="1.9" stroke-linecap="round" stroke-linejoin="round"><path d="M9.3 3.1A9.45 9.45 0 1 0 20.9 14.5"/><path d="M12.9 3.1v6.7a1.1 1.1 0 0 0 1.1 1.1h7.3a1.1 1.1 0 0 0 1.1-1.2A9.2 9.2 0 0 0 14.1 2a1.1 1.1 0 0 0-1.2 1.1z"/></svg>
  <div class="si" style="top:87px;font-size:17.78px">Tổng quan</div>

  <svg class="a" style="left:24px;top:138px" width="24" height="24" viewBox="0 0 24 24" fill="none" stroke="#fff" stroke-width="1.9" stroke-linecap="round" stroke-linejoin="round"><rect x="2.15" y="1.8" width="20.9" height="19.05" rx="4.5"/><circle cx="8.8" cy="8.6" r="2.2"/><path d="M4.8 16.2a4.1 4.1 0 0 1 8.2 0"/><path d="M14.2 7.3h6.4M14.9 11.6h5.7M17.2 15.7h3.4"/></svg>
  <div class="si" style="top:139px;font-size:17.40px">Hồ sơ</div>
  <svg class="a" style="left:232px;top:142px" width="20" height="13" viewBox="0 0 20 13" fill="none" stroke="#fff" stroke-width="2.4" stroke-linecap="round" stroke-linejoin="round"><path d="M2 11L10 3l8 8"/></svg>

  <div class="a" style="left:8px;top:168px;width:265px;height:69px;border:2px solid #d9535b"></div>
  <div class="a" style="left:14px;top:177px;width:253px;height:50px;border-radius:13px;background:#3a59f6"></div>
  <div class="si" style="left:64px;top:192px;font-weight:bold;font-size:17px">Hồ sơ CBNV</div>
  <div class="si" style="left:64px;top:244px;font-size:17.60px">Bổ sung SYLL</div>
  <div class="si" style="left:64px;top:297px;font-size:17.80px">Hợp đồng</div>
  <div class="si" style="left:64px;top:349px;font-size:17.43px">Hồ sơ CBNV cấp dưới</div>

  <svg class="a" style="left:24px;top:399px" width="24" height="24" viewBox="0 0 24 24" fill="none" stroke="#fff" stroke-width="1.9" stroke-linecap="round" stroke-linejoin="round"><path d="M20.6 9L21.5 4.2C21.7 2.9 21 1.9 19.7 1.9H5.3C4 1.9 3.3 2.7 3.3 3.9V6.4C3.3 7.1 3.6 7.8 4.1 8.3L8.4 12.6C9 13.2 9.3 13.9 9.3 14.6V19.7C9.3 21.6 10.9 22.4 12.4 21.3L14.9 19.5"/><circle cx="16.7" cy="13.8" r="2.95"/><path d="M18.9 16l2.1 2"/></svg>
  <div class="si" style="top:402px;font-size:18.09px">Tìm kiếm thống kê</div>

  <svg class="a" style="left:24px;top:452px" width="24" height="24" viewBox="0 0 24 24" fill="none" stroke="#fff" stroke-width="1.9" stroke-linecap="round" stroke-linejoin="round"><path d="M13 23.1H7.1A5 5 0 0 1 2.1 18.1V6.7A5 5 0 0 1 7.1 1.7H18.2A5 5 0 0 1 23.2 6.7V12H2.1"/><path d="M6 6.6v2.6M10.4 6.6v2.6M14.2 7.9h5M6 15.2v2.6M10.4 15.2v2.6"/><path d="M16.6 18a3 3 0 0 1 5.2-1.4M21.9 14.9v1.9h-1.9M22.6 20a3 3 0 0 1-5.2 1.4M17.3 23.1v-1.9h1.9" stroke-width="1.7"/></svg>
  <div class="si" style="top:454px;font-size:17.57px">Đồng bộ CSDLQG</div>
  <svg class="a" style="left:232px;top:458px" width="20" height="13" viewBox="0 0 20 13" fill="none" stroke="#fff" stroke-width="2.4" stroke-linecap="round" stroke-linejoin="round"><path d="M2 2l8 8 8-8"/></svg>

  <svg class="a" style="left:24px;top:504px" width="24" height="24" viewBox="0 0 24 24" fill="none" stroke="#fff" stroke-width="1.9" stroke-linecap="round" stroke-linejoin="round">
    <path d="M4.5 22.5V2.5h15.5l-3.8 5.8 3.8 5.8H4.5"/>
  </svg>
  <div class="si" style="top:507px;font-size:18.19px">Chỉ tiêu biên chế</div>

  <svg class="a" style="left:24px;top:558px" width="24" height="24" viewBox="0 0 24 24" fill="none" stroke="#fff" stroke-width="1.9" stroke-linecap="round" stroke-linejoin="round"><circle cx="9.25" cy="5.6" r="4.3"/><ellipse cx="9.5" cy="17.3" rx="7" ry="4.25"/><path d="M16.7 2.1a3.9 3.9 0 0 1 0 7.6"/><path d="M18.7 13.3c2.8.7 4.3 1.9 4.3 3.3s-1.5 2.6-4.3 3.3"/></svg>
  <div class="si" style="top:559px;font-size:18.20px">Biến động cán bộ</div>
  <svg class="a" style="left:232px;top:563px" width="20" height="13" viewBox="0 0 20 13" fill="none" stroke="#fff" stroke-width="2.4" stroke-linecap="round" stroke-linejoin="round"><path d="M2 2l8 8 8-8"/></svg>

  <svg class="a" style="left:24px;top:609px" width="24" height="24" viewBox="0 0 24 24" fill="none" stroke="#fff" stroke-width="1.9" stroke-linecap="round" stroke-linejoin="round"><path d="M21.6 12V6A4 4 0 0 0 17.6 2H8A4 4 0 0 0 4 6V19.8C4 21.4 5.6 21.7 6.6 20.4C7.4 19.4 8 18.6 8.8 18.9C9.6 19.2 10.3 21 11.2 22"/><path d="M7.6 7.2h10M8.6 11.3h7.8"/><path d="M15.6 21.4a1.6 1.6 0 0 1-.4-2.2l3.6-3.9a1.7 1.7 0 0 1 2.5 2.3l-3.6 3.9a1.6 1.6 0 0 1-2.1-.1z"/></svg>
  <div class="si" style="top:612px;font-size:17.66px">Lương, phụ cấp</div>
  <svg class="a" style="left:232px;top:616px" width="20" height="13" viewBox="0 0 20 13" fill="none" stroke="#fff" stroke-width="2.4" stroke-linecap="round" stroke-linejoin="round"><path d="M2 2l8 8 8-8"/></svg>

  <svg class="a" style="left:24px;top:662px" width="24" height="24" viewBox="0 0 24 24" fill="none" stroke="#fff" stroke-width="1.9" stroke-linecap="round" stroke-linejoin="round"><circle cx="6.2" cy="4.6" r="2.95"/><circle cx="18.6" cy="4.6" r="2.95"/><circle cx="12.3" cy="12.35" r="2.4"/><path d="M7.7 10.05H4.6a2.4 2.4 0 0 0 0 4.8H7.7M16.9 10.05H20a2.4 2.4 0 0 1 0 4.8H16.9"/><ellipse cx="12.5" cy="20.4" rx="4.25" ry="2.55"/></svg>
  <div class="si" style="top:664px;font-size:18.27px">Quy hoạch cán bộ</div>

  <svg class="a" style="left:24px;top:714px" width="24" height="24" viewBox="0 0 24 24" fill="none" stroke="#fff" stroke-width="1.9" stroke-linecap="round" stroke-linejoin="round"><path d="M11.5 2.2a2 2 0 0 1 2 0l7.4 4.4a2 2 0 0 1 1 1.7v8.6a2 2 0 0 1-1 1.7l-7.4 4.4a2 2 0 0 1-2 0l-7.5-4.4a2 2 0 0 1-1-1.7V8.3a2 2 0 0 1 1-1.7z"/><circle cx="12.5" cy="8.9" r="2.35"/><path d="M8.3 17.9a4.3 4.3 0 0 1 8.4 0"/></svg>
  <div class="si" style="top:717px;font-size:17.73px">Đào tạo, bồi dưỡng</div>

  <svg class="a" style="left:24px;top:767px" width="24" height="24" viewBox="0 0 24 24" fill="none" stroke="#fff" stroke-width="1.9" stroke-linecap="round" stroke-linejoin="round"><path d="M7 2.2H18V8.6A5.5 5.5 0 0 1 7 8.6Z"/><path d="M7 4.2H4.4C3 4.2 2.3 5.1 2.3 6.5C2.3 9 4.5 10.9 7.4 11.3M18 4.2H20.6C22 4.2 22.7 5.1 22.7 6.5C22.7 9 20.5 10.9 17.6 11.3"/><path d="M12.5 14.2v4.6"/><path d="M8.6 19.2H16.4L19.3 22.6H5.7Z"/></svg>
  <div class="si" style="top:769px;font-size:17.79px">Khen thưởng, kỷ luật</div>

  <svg class="a" style="left:24px;top:819px" width="24" height="24" viewBox="0 0 24 24" fill="none" stroke="#fff" stroke-width="1.9" stroke-linecap="round" stroke-linejoin="round">
    <rect x="1.8" y="1.6" width="21" height="21" rx="5.5"/><path d="M6 8l1.3 1.3 2.3-2.6M6 15l1.3 1.3 2.3-2.6"/><path d="M12.4 8.2h6M12.4 15.8h6"/>
  </svg>
  <div class="si" style="top:822px;font-size:17.74px">Đánh giá</div>

  <svg class="a" style="left:24px;top:872px" width="24" height="24" viewBox="0 0 24 24" fill="none" stroke="#fff" stroke-width="1.9" stroke-linecap="round" stroke-linejoin="round">
    <path d="M2 22V8.5A5.5 5.5 0 0 1 7.5 3h9A5.5 5.5 0 0 1 22 8.5V22"/><path d="M13 3v6h9"/>
  </svg>
  <div class="si" style="top:874px;font-size:17.70px">Báo cáo</div>
  <svg class="a" style="left:232px;top:879px" width="20" height="13" viewBox="0 0 20 13" fill="none" stroke="#fff" stroke-width="2.4" stroke-linecap="round" stroke-linejoin="round"><path d="M2 2l8 8 8-8"/></svg>
</div>
<div class="a" style="left:14px;top:897px;width:253px;height:40px;border-radius:6px;background:#3a3856"></div>
<svg class="a" style="left:90px;top:904px" width="24" height="24" viewBox="0 0 24 24" fill="none" stroke="#fff" stroke-width="1.9" stroke-linecap="round" stroke-linejoin="round">
  <path d="M4.2 2.6C2.6 3.4 2 4.6 2 6.5v11c0 1.9.6 3.1 2.2 3.9"/><path d="M13.5 12H6.6M9.8 8.6L6.4 12l3.4 3.4"/><rect x="15.5" y="2" width="6" height="20" rx="3"/>
</svg>
<div class="si" style="left:125px;top:907px;font-size:17.99px">Thu gọn</div>
<div class="a" id="shadowline" style="left:0;top:57px;width:280px;height:1px;background:rgba(0,0,0,0.25)"></div><div class="a" style="left:280px;top:57px;width:1641px;height:2px;background:rgba(0,0,0,0.02)"></div>
<div class="bd" style="left:0;top:0;width:1921px;height:1px"></div>
<div class="bd" style="left:0;top:0;width:1px;height:946px"></div>
<div class="bd" style="left:1920px;top:0;width:1px;height:946px"></div>
<div class="bd" style="left:0;top:945px;width:1921px;height:1px"></div>
</body></html>
